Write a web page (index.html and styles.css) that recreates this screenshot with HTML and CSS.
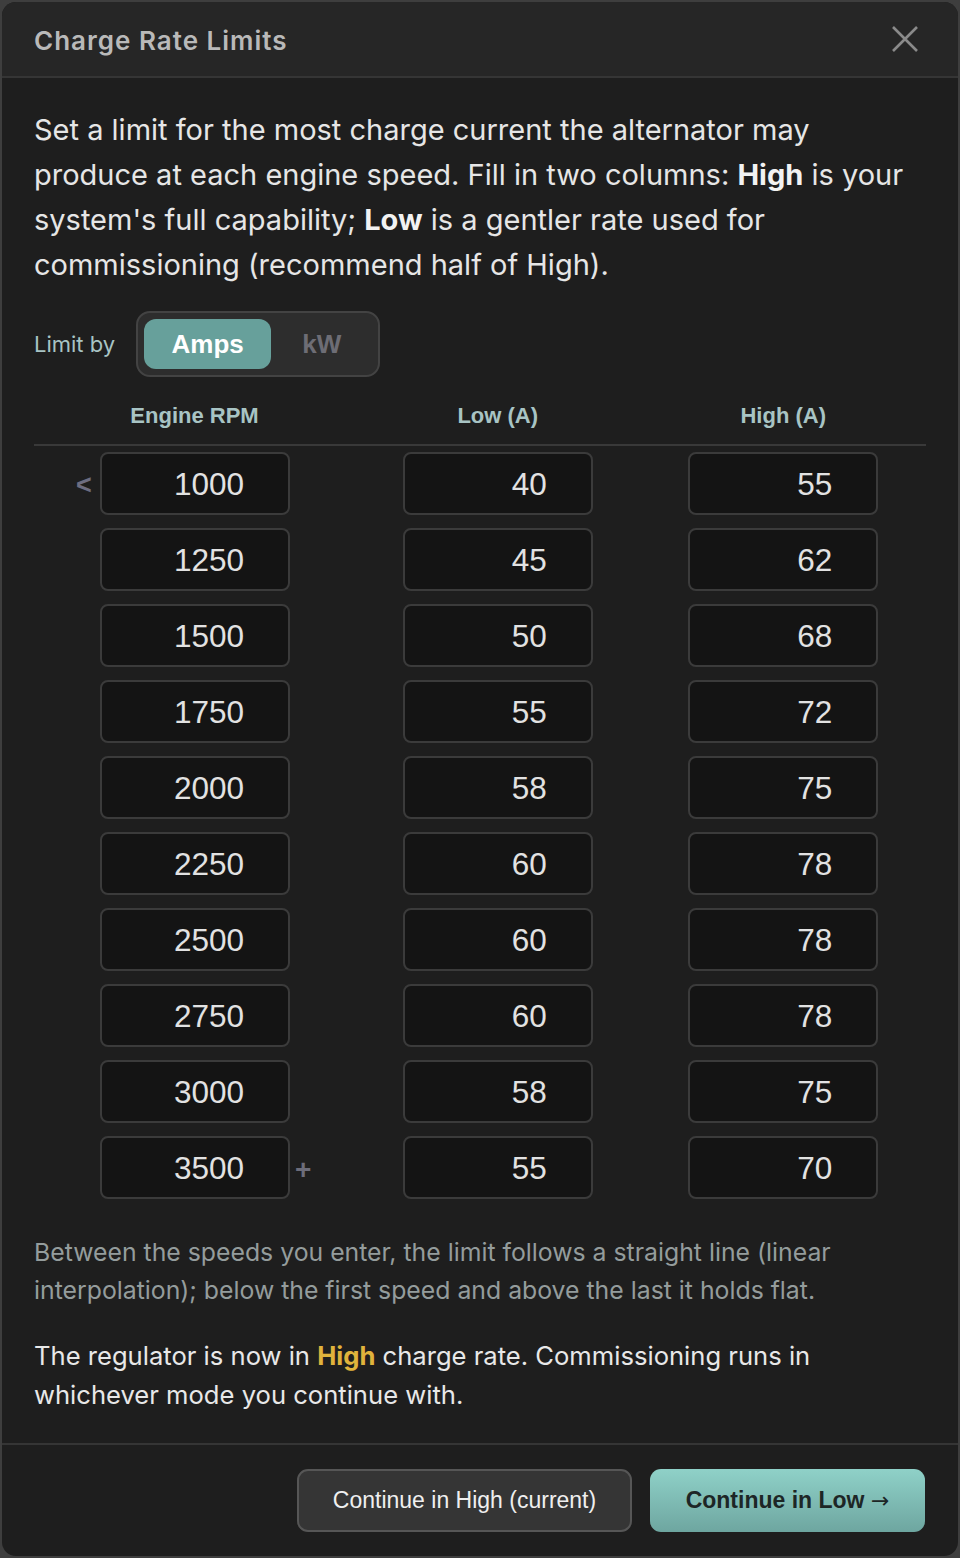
FILE: index.html
```html
<!DOCTYPE html>
<html lang="en">
<head>
<meta charset="utf-8">
<title>Charge Rate Limits</title>
<link rel="stylesheet" href="styles.css">
</head>
<body>
<div class="dialog">
  <header class="dlg-head">
    <h1 class="dlg-title">Charge Rate Limits</h1>
    <button class="close" aria-label="Close">
      <svg width="30" height="30" viewBox="0 0 30 30"><path d="M3 3 L27 27 M27 3 L3 27" stroke="#8a8a8a" stroke-width="2.6" fill="none"/></svg>
    </button>
  </header>
  <main class="dlg-body">
    <p class="intro">Set a limit for the most charge current the alternator may produce at each engine speed. Fill in two columns: <b>High</b> is your system's full capability; <b>Low</b> is a gentler rate used for commissioning (recommend half of High).</p>
    <div class="limit-row">
      <span class="limit-label">Limit by</span>
      <div class="seg">
        <span class="seg-btn active">Amps</span>
        <span class="seg-btn">kW</span>
      </div>
    </div>
    <div class="table">
      <div class="thead">
        <div class="th">Engine RPM</div>
        <div class="th">Low (A)</div>
        <div class="th">High (A)</div>
      </div>
      <div class="rows">
        <div class="row"><div class="cell rpm"><span class="mark lt">&lt;</span><div class="inp">1000</div></div><div class="cell"><div class="inp">40</div></div><div class="cell"><div class="inp">55</div></div></div>
        <div class="row"><div class="cell rpm"><div class="inp">1250</div></div><div class="cell"><div class="inp">45</div></div><div class="cell"><div class="inp">62</div></div></div>
        <div class="row"><div class="cell rpm"><div class="inp">1500</div></div><div class="cell"><div class="inp">50</div></div><div class="cell"><div class="inp">68</div></div></div>
        <div class="row"><div class="cell rpm"><div class="inp">1750</div></div><div class="cell"><div class="inp">55</div></div><div class="cell"><div class="inp">72</div></div></div>
        <div class="row"><div class="cell rpm"><div class="inp">2000</div></div><div class="cell"><div class="inp">58</div></div><div class="cell"><div class="inp">75</div></div></div>
        <div class="row"><div class="cell rpm"><div class="inp">2250</div></div><div class="cell"><div class="inp">60</div></div><div class="cell"><div class="inp">78</div></div></div>
        <div class="row"><div class="cell rpm"><div class="inp">2500</div></div><div class="cell"><div class="inp">60</div></div><div class="cell"><div class="inp">78</div></div></div>
        <div class="row"><div class="cell rpm"><div class="inp">2750</div></div><div class="cell"><div class="inp">60</div></div><div class="cell"><div class="inp">78</div></div></div>
        <div class="row"><div class="cell rpm"><div class="inp">3000</div></div><div class="cell"><div class="inp">58</div></div><div class="cell"><div class="inp">75</div></div></div>
        <div class="row"><div class="cell rpm"><div class="inp">3500</div><span class="mark plus">+</span></div><div class="cell"><div class="inp">55</div></div><div class="cell"><div class="inp">70</div></div></div>
      </div>
    </div>
    <p class="footnote">Between the speeds you enter, the limit follows a straight line (linear interpolation); below the first speed and above the last it holds flat.</p>
    <p class="note">The regulator is now in <b class="hi">High</b> charge rate. Commissioning runs in whichever mode you continue with.</p>
  </main>
  <footer class="dlg-foot">
    <button class="btn secondary">Continue in High (current)</button>
    <button class="btn primary">Continue in Low <span class="arrow">→</span></button>
  </footer>
</div>
</body>
</html>
```
FILE: styles.css
```css
* { box-sizing: border-box; }
html, body { margin: 0; padding: 0; }
body {
  background: #3e3e3e;
  padding: 2px;
  width: 960px;
  height: 1558px;
  font-family: "Liberation Sans", Arial, sans-serif;
}
.dialog {
  height: 1554px;
  background: #1e1e1e;
  border-radius: 14px;
  overflow: hidden;
  display: flex;
  flex-direction: column;
}
.dlg-head {
  height: 76px;
  background: #262626;
  border-bottom: 2px solid #353535;
  display: flex;
  align-items: center;
  justify-content: space-between;
  padding: 2px 38px 0 32px;
}
.dlg-title {
  margin: 0;
  font-family: Inter, "Liberation Sans", sans-serif;
  font-weight: 600;
  font-size: 26px;
  letter-spacing: 1px;
  color: #b9b9b9;
}
.close {
  background: none;
  border: 0;
  padding: 0;
  width: 30px;
  height: 30px;
  display: flex;
  margin-top: -2px;
}
.dlg-body {
  flex: 1;
  padding: 29px 32px 0 32px;
}
.intro {
  margin: 0;
  width: 880px;
  font-family: Inter, "Liberation Sans", sans-serif;
  font-size: 29px;
  line-height: 45px;
  color: #e6e6e6;
}
.intro b { color: #f2f2f2; font-weight: 700; }
.limit-row {
  margin-top: 24px;
  display: flex;
  align-items: center;
  gap: 21px;
}
.limit-label {
  font-family: Inter, "Liberation Sans", sans-serif;
  font-size: 22px;
  color: #a8c4c4;
}
.seg {
  display: flex;
  height: 66px;
  padding: 6px;
  background: #2d2d2d;
  border: 2px solid #434343;
  border-radius: 14px;
}
.seg-btn {
  display: flex;
  align-items: center;
  justify-content: center;
  font-weight: 700;
  font-size: 26px;
  color: #6d6d75;
  width: 101px;
}
.seg-btn.active {
  width: 127px;
  background: #67a09b;
  color: #ffffff;
  border-radius: 12px;
}
.table { margin-top: 24px; }
.thead {
  display: grid;
  grid-template-columns: 321px 1fr 1fr;
  border-bottom: 2px solid #393939;
  height: 45px;
}
.th {
  text-align: center;
  font-weight: 700;
  font-size: 22px;
  color: #a8c4c4;
  line-height: 30px;
}
.rows {
  padding-top: 6px;
  display: flex;
  flex-direction: column;
  gap: 13px;
}
.row {
  display: grid;
  grid-template-columns: 321px 1fr 1fr;
}
.cell {
  display: flex;
  justify-content: center;
  position: relative;
}
.cell.rpm { justify-content: flex-start; padding-left: 66px; }
.inp {
  width: 190px;
  height: 63px;
  background: #141414;
  border: 2px solid #3b3b3b;
  border-radius: 8px;
  color: #e2e2e2;
  font-size: 31.5px;
  text-align: right;
  padding-right: 44px;
  line-height: 60px;
}
.mark {
  position: absolute;
  font-weight: 700;
  color: #6d6d80;
}
.mark.lt { left: 42px; top: 18px; font-size: 27px; }
.mark.plus { left: 261px; top: 18px; font-size: 28px; color: #6d6d7a; }
.footnote {
  margin: 34px 0 0;
  font-family: Inter, "Liberation Sans", sans-serif;
  font-size: 24.8px;
  line-height: 38px;
  color: #949c9c;
}
.note {
  margin: 27px 0 0;
  font-family: Inter, "Liberation Sans", sans-serif;
  font-size: 25.6px;
  line-height: 39px;
  color: #e8e8e8;
}
.hi { color: #e0b33c; }
.dlg-foot {
  height: 113px;
  border-top: 2px solid #353535;
  display: flex;
  justify-content: flex-end;
  align-items: flex-start;
  gap: 18px;
  padding: 24px 33px 0 0;
}
.btn {
  height: 63px;
  font-family: "Liberation Sans", Arial, sans-serif;
  font-size: 23px;
  border-radius: 11px;
  cursor: pointer;
}
.secondary {
  width: 335px;
  background: #353535;
  border: 2px solid #565656;
  color: #efefef;
}
.primary {
  width: 275px;
  border: 0;
  background: linear-gradient(#8fd1c8, #6ea6a0);
  color: #1d2626;
  font-weight: 700;
}
.arrow { font-family: "DejaVu Sans", sans-serif; font-weight: 400; font-size: 22px; }
```
